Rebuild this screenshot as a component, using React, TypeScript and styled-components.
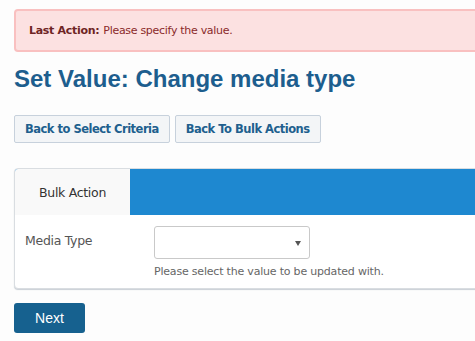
import React from "react";
import styled, { createGlobalStyle } from "styled-components";

const GlobalStyle = createGlobalStyle`
  html, body {
    margin: 0;
    padding: 0;
    background: #fdfdfd;
    overflow: hidden;
  }
  body {
    font-family: "DejaVu Sans", Verdana, sans-serif;
  }
`;

const Page = styled.div`
  width: 490px;
  padding: 9px 0 0 14px;
`;

const Alert = styled.div`
  height: 39px;
  display: flex;
  align-items: center;
  padding: 0 13px;
  background: #fce1e1;
  border: 2px solid #f9c0c0;
  border-radius: 4px;
  font-size: 11px;
  letter-spacing: -0.3px;
  color: #8a2a2a;
  strong {
    color: #6e2424;
    margin-right: 4px;
  }
`;

const Title = styled.h1`
  margin: 14px 0 0;
  font-family: "Liberation Sans", Arial, sans-serif;
  font-size: 24px;
  font-weight: bold;
  color: #1d5e8e;
  line-height: 26px;
`;

const ButtonRow = styled.div`
  display: flex;
  gap: 5px;
  margin-top: 23px;
`;

const NavButton = styled.button`
  height: 28px;
  padding: 0 10px;
  background: #f3f5f7;
  border: 1px solid #c7d1dc;
  border-radius: 2px;
  font-family: "DejaVu Sans", Verdana, sans-serif;
  font-size: 11.5px;
  font-weight: bold;
  letter-spacing: -0.5px;
  color: #205f8e;
`;

const Panel = styled.div`
  margin-top: 25px;
  background: #fff;
  border: 1px solid #d9dde1;
  border-radius: 4px;
  box-shadow: 0 1px 1px #c9cfd5;
  overflow: hidden;
`;

const TabBar = styled.div`
  display: flex;
  height: 46px;
  background: #1e88d0;
`;

const Tab = styled.div<{ $active?: boolean }>`
  width: 115px;
  display: flex;
  align-items: center;
  justify-content: center;
  background: ${(p) => (p.$active ? "#f9f9f9" : "transparent")};
  font-size: 12.5px;
  letter-spacing: -0.3px;
  color: #333;
`;

const FormRow = styled.div`
  display: grid;
  grid-template-columns: 129px 156px;
  padding: 11px 0 10px 10px;
`;

const Label = styled.div`
  font-size: 12.5px;
  letter-spacing: -0.3px;
  color: #555;
  padding-top: 7px;
`;

const Field = styled.div`
  display: flex;
  flex-direction: column;
`;

const Select = styled.div`
  position: relative;
  height: 31px;
  border: 1px solid #c9c9c9;
  border-radius: 3px;
  background: #fff;
  &::after {
    content: "";
    position: absolute;
    right: 8px;
    top: 14px;
    border-left: 3.5px solid transparent;
    border-right: 3.5px solid transparent;
    border-top: 5px solid #555;
  }
`;

const Help = styled.div`
  margin-top: 6px;
  white-space: nowrap;
  font-size: 11px;
  letter-spacing: -0.2px;
  color: #666;
`;

const NextButton = styled.button`
  margin-top: 14px;
  width: 71px;
  height: 30px;
  background: #16618f;
  border: none;
  border-radius: 3px;
  color: #fff;
  font-family: "Liberation Sans", Arial, sans-serif;
  font-size: 14px;
`;

export default function App() {
  return (
    <>
      <GlobalStyle />
      <Page>
        <Alert>
          <strong>Last Action:</strong> Please specify the value.
        </Alert>
        <Title>Set Value: Change media type</Title>
        <ButtonRow>
          <NavButton>Back to Select Criteria</NavButton>
          <NavButton>Back To Bulk Actions</NavButton>
        </ButtonRow>
        <Panel>
          <TabBar>
            <Tab $active>Bulk Action</Tab>
          </TabBar>
          <FormRow>
            <Label>Media Type</Label>
            <Field>
              <Select />
              <Help>Please select the value to be updated with.</Help>
            </Field>
          </FormRow>
        </Panel>
        <NextButton>Next</NextButton>
      </Page>
    </>
  );
}
